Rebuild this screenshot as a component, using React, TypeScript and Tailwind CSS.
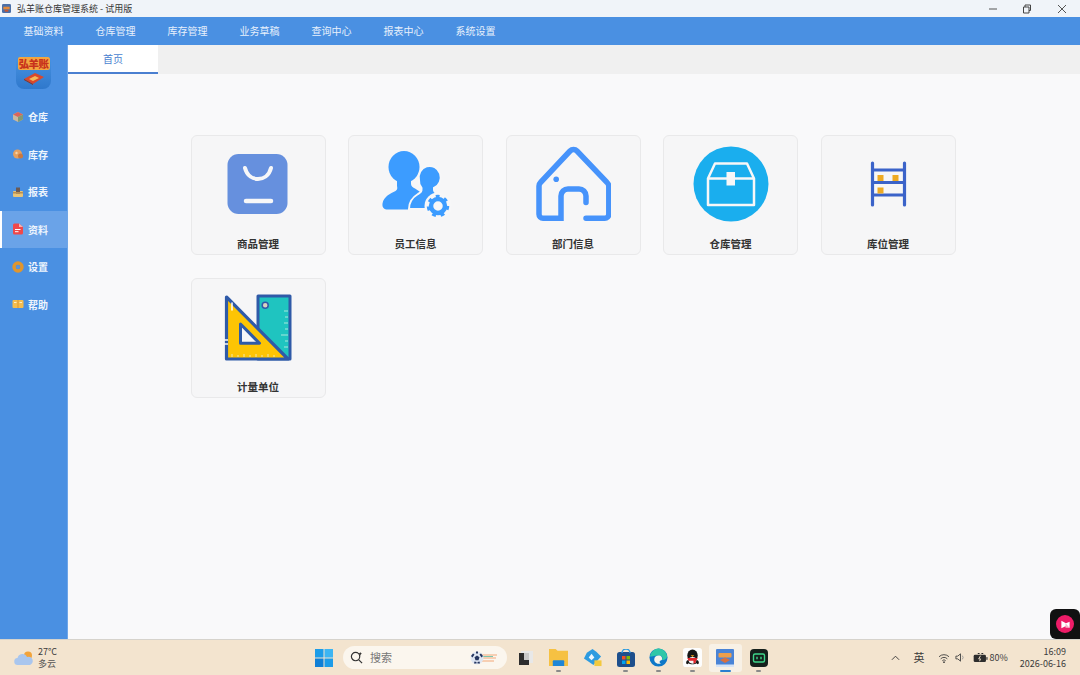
import React from "react";

const FONT = "font-['Noto_Sans_CJK_SC','Noto_Sans',sans-serif]";

const menus = ["基础资料", "仓库管理", "库存管理", "业务草稿", "查询中心", "报表中心", "系统设置"];

const BoxIcon = () => (
  <svg viewBox="0 0 12 12" className="h-3 w-3">
    <path d="M6 1l5 2.500v5L6 11 1 8.500v-5z" fill="#c9b8a0" />
    <path d="M6 1l5 2.500L6 6 1 3.500z" fill="#d9655c" />
    <path d="M6 6v5l5-2.500v-5z" fill="#7f9a76" />
  </svg>
);
const StockIcon = () => (
  <svg viewBox="0 0 12 12" className="h-3 w-3">
    <circle cx="5.500" cy="6" r="4.500" fill="#e5a05f" />
    <circle cx="8.500" cy="8" r="2.500" fill="#c9793f" />
    <circle cx="4.500" cy="5" r="1.200" fill="#f6d3a8" />
  </svg>
);
const ReportIcon = () => (
  <svg viewBox="0 0 12 12" className="h-3 w-3">
    <rect x="1" y="5" width="10" height="6" rx="1" fill="#e8c477" />
    <rect x="4" y="1.500" width="4" height="6" fill="#6b5a55" />
    <path d="M1 6h10v1.500H1z" fill="#b98f52" />
  </svg>
);
const DataIcon = () => (
  <svg viewBox="0 0 12 12" className="h-3 w-3">
    <path d="M1 2A1.500 1.500 0 0 1 2.500.5H7L11 4v6a1.500 1.500 0 0 1-1.500 1.500h-7A1.500 1.500 0 0 1 1 10z" fill="#f0484a" />
    <path d="M7 .5L11 4H7z" fill="#f9b0ae" />
    <path d="M3 6.500h5.500M3 8.700h3.500" stroke="#fff" strokeWidth="1" />
  </svg>
);
const SettingIcon = () => (
  <svg viewBox="0 0 12 12" className="h-3 w-3">
    <circle cx="6" cy="6" r="4" fill="none" stroke="#e0962e" strokeWidth="3.400" />
    <circle cx="6" cy="6" r="1.800" fill="#5f94d8" />
  </svg>
);
const HelpIcon = () => (
  <svg viewBox="0 0 12 12" className="h-3 w-3">
    <rect x=".5" y="2" width="11" height="8" rx="1" fill="#f4bd4f" />
    <path d="M6 2v8" stroke="#dd9630" strokeWidth="1" />
    <path d="M2 4.500h2.500M7.500 4.500H10" stroke="#fff0c8" strokeWidth="1" />
  </svg>
);

const sideItems = [
  { label: "仓库", icon: <BoxIcon /> },
  { label: "库存", icon: <StockIcon /> },
  { label: "报表", icon: <ReportIcon /> },
  { label: "资料", icon: <DataIcon />, active: true },
  { label: "设置", icon: <SettingIcon /> },
  { label: "帮助", icon: <HelpIcon /> },
];

const BagIcon = () => (
  <svg viewBox="0 0 76 76" className="h-full w-full">
    <rect x="7.500" y="8" width="60" height="60" rx="11" fill="#6690de" />
    <path d="M25 22c2 8 8 11 13 11s11-3 13-11" fill="none" stroke="#f7f7f8" strokeWidth="4" strokeLinecap="round" />
    <path d="M26 55h25" stroke="#f7f7f8" strokeWidth="4.500" strokeLinecap="round" />
  </svg>
);
const StaffIcon = () => (
  <svg viewBox="0 0 76 76" className="h-full w-full">
    <ellipse cx="26" cy="21" rx="15.500" ry="16" fill="#3c9cff" />
    <path d="M19 32h14v6c0 2 2 3.500 4 4.500l6 4-12 17H10c-4 0-6-2-5.500-6 1-7 8-10 13-12.500 2-1 2-3 1.500-5z" fill="#3c9cff" />
    <path
      d="M41 34a11 11.500 0 1 1 15 8v2c0 2 2 3 4 4l2 1-6 14H31c0-8 4-12 9-15 2-1 4-2 3.500-5v-1a11 11 0 0 1-2.500-8z"
      fill="#3c9cff"
      stroke="#f7f7f8"
      strokeWidth="2"
    />
    <circle cx="60" cy="60" r="13.500" fill="#f7f7f8" />
    <circle cx="60" cy="60" r="7" fill="none" stroke="#3c9cff" strokeWidth="4.500" />
    <circle cx="60" cy="60" r="9.500" fill="none" stroke="#3c9cff" strokeWidth="3.500" strokeDasharray="3.730 4.730" />
  </svg>
);
const HouseIcon = () => (
  <svg viewBox="0 0 76 76" className="h-full w-full">
    <path
      d="M51 56.500V50a7 7 0 0 0-7-7H33a7 7 0 0 0-7 7v22.300H8a4 4 0 0 1-4-4V40a5 5 0 0 1 1.500-3.500L35 5a5 5 0 0 1 7 0l30 31.500a5 5 0 0 1 1.800 3.500v28.300a4 4 0 0 1-4 4H51"
      fill="none"
      stroke="#4693fb"
      strokeWidth="5.500"
      strokeLinecap="round"
    />
    <circle cx="21.200" cy="33.300" r="2.800" fill="#4693fb" />
  </svg>
);
const ChestIcon = () => (
  <svg viewBox="0 0 76 76" className="h-full w-full">
    <circle cx="38" cy="38" r="37.500" fill="#1aaeee" />
    <path d="M15 32.500l7-15h32l7 15V59H15z" fill="none" stroke="#f7f7f8" strokeWidth="2.500" strokeLinejoin="round" />
    <path d="M15 32.500h46" stroke="#f7f7f8" strokeWidth="2.500" />
    <rect x="33.500" y="26" width="8.500" height="13.500" fill="#f7f7f8" />
  </svg>
);
const ShelfIcon = () => (
  <svg viewBox="0 0 76 76" className="h-full w-full">
    <path d="M22.500 17v42M54.500 17v42" stroke="#3b63c9" strokeWidth="3.200" strokeLinecap="round" />
    <path d="M22.500 24h32M22.500 36.500h32M22.500 49h32" stroke="#3b63c9" strokeWidth="3" />
    <rect x="27.500" y="29" width="6" height="6" fill="#eeaa22" />
    <rect x="42.500" y="29" width="6" height="6" fill="#eeaa22" />
    <rect x="27.500" y="41.500" width="6" height="6" fill="#eeaa22" />
  </svg>
);
const RulerIcon = () => (
  <svg viewBox="0 0 76 76" className="h-full w-full">
    <path d="M38 7h32v63H38z" fill="#1fc4c0" stroke="#2f5aa8" strokeWidth="3" strokeLinejoin="round" />
    <circle cx="45.200" cy="16.300" r="3" fill="#d9d2c0" stroke="#2f5aa8" strokeWidth="1.500" />
    <path d="M68 22h-4M68 28h-3M68 34h-4M68 40h-3M68 46h-7M68 52h-3M68 58h-4" stroke="#a8e8de" strokeWidth="1" />
    <path d="M6.500 8l61.500 62H6.500z" fill="#fdc404" stroke="#2f5aa8" strokeWidth="3.200" strokeLinejoin="round" />
    <path d="M20.500 35l19 19.300h-19z" fill="#f7f7f8" stroke="#2f5aa8" strokeWidth="3" strokeLinejoin="round" />
    <path d="M12 68v-3M18 68v-2M24 68v-3M30 68v-2M36 68v-3M42 68v-2M48 68v-3M54 68v-2" stroke="#f3e7ab" strokeWidth="1" />
    <path d="M12 14v7" stroke="#fff" strokeWidth="1.500" strokeLinecap="round" />
    <path d="M3 51h5M3 55h5" stroke="#f7f7f8" strokeWidth="1.500" />
  </svg>
);

const cards = [
  { label: "商品管理", icon: <BagIcon /> },
  { label: "员工信息", icon: <StaffIcon /> },
  { label: "部门信息", icon: <HouseIcon /> },
  { label: "仓库管理", icon: <ChestIcon /> },
  { label: "库位管理", icon: <ShelfIcon /> },
  { label: "计量单位", icon: <RulerIcon /> },
];

const AppLogo = () => (
  <div className="flex h-[35px] w-[35px] flex-col items-center overflow-hidden rounded-[8px] bg-gradient-to-b from-[#4a96e4] to-[#2f78cc] pt-[3px]">
    <span className="rounded-[2px] bg-[#f4a640] px-[1px] text-[10.5px] font-black leading-[13px] tracking-[-0.5px] text-[#c8321c]">
      弘羊账
    </span>
    <svg viewBox="0 0 24 14" className="mt-[1px] h-[14px] w-[24px]">
      <path d="M2 8l11-6 9 4-11 7z" fill="#d9482c" />
      <path d="M7 8l6-3 4 2-6 3z" fill="#f5b85a" />
      <path d="M2 8l9 5v1L2 9z" fill="#8c2f1c" />
    </svg>
  </div>
);

const AppSmall = () => (
  <svg viewBox="0 0 18 18" className="h-full w-full">
    <rect width="18" height="18" rx="1" fill="#4a84d6" />
    <rect x="2.500" y="4" width="13" height="4.500" rx="1" fill="#ee9f4a" />
    <path d="M4 11l5-2.500 5 2.500-5 3z" fill="#d8703f" />
    <rect y="15.500" width="18" height="2.500" fill="#d6e4f6" />
  </svg>
);

const taskIcons = [
  {
    dot: false,
    svg: (
      <svg viewBox="0 0 16 16" className="h-[16px] w-[16px]">
        <rect x="3" y="1" width="12" height="12" fill="#e8e8e8" />
        <rect x="1" y="3" width="10" height="12" fill="#2d2d2d" />
        <rect x="6" y="3" width="5" height="7" fill="#c9c9c9" />
      </svg>
    ),
  },
  {
    dot: true,
    svg: (
      <svg viewBox="0 0 20 20" className="h-[19px] w-[19px]">
        <path d="M0 1h7l2 2h11v16H0z" fill="#f6c142" />
        <path d="M5 13h10a1 1 0 0 1 1 1v5H4v-5a1 1 0 0 1 1-1z" fill="#1e86d6" />
      </svg>
    ),
  },
  {
    dot: false,
    svg: (
      <svg viewBox="0 0 20 20" className="h-[19px] w-[19px]">
        <path d="M10 1l4 3 5 5-8 9-10-7 3-6z" fill="#2d9be0" />
        <path d="M9 6l3 4-3 3-3-3z" fill="#eaf6ff" />
        <rect x="12" y="13" width="7.500" height="6" fill="#f3c93d" />
      </svg>
    ),
  },
  {
    dot: true,
    svg: (
      <svg viewBox="0 0 18 18" className="h-[18px] w-[18px]">
        <rect y="3" width="18" height="15" rx="2.500" fill="#1d4f8c" />
        <path d="M5 4a4 4 0 0 1 8 0" fill="none" stroke="#2d9be0" strokeWidth="1.500" />
        <rect x="5" y="7" width="3.500" height="3.500" fill="#f25022" />
        <rect x="9.500" y="7" width="3.500" height="3.500" fill="#7fba00" />
        <rect x="5" y="11.500" width="3.500" height="3.500" fill="#00a4ef" />
        <rect x="9.500" y="11.500" width="3.500" height="3.500" fill="#ffb900" />
      </svg>
    ),
  },
  {
    dot: true,
    svg: (
      <svg viewBox="0 0 20 20" className="h-[19px] w-[19px]">
        <circle cx="10" cy="10" r="9.500" fill="#0f78c8" />
        <path d="M1 9c1-5 5-8.500 9-8.500 5 0 9 4 9 8.500 0 3-3 4-5.500 3.500 1.500-2 .5-4-3-4.500C7 7.500 4 9 1 9z" fill="#2fc7a8" />
        <path d="M5.500 12c0-3 3-4.500 5.500-4 2 .5 3.500 2 2.500 4.500-2 .5-3.500 2-1 4-3 .8-7-1-7-4.500z" fill="#f8f3ea" />
      </svg>
    ),
  },
  {
    dot: true,
    svg: (
      <svg viewBox="0 0 20 20" className="h-[19px] w-[19px]">
        <rect width="20" height="20" rx="3" fill="#fdfdfd" />
        <ellipse cx="10" cy="8" rx="5.500" ry="6.500" fill="#161616" />
        <path d="M4 13.500C3 15 3 17 4.500 17l1.500-1c1 1.500 7 1.500 8 0l1.500 1c1.500 0 1.500-2 .5-3.500-1-2-11-2-12 0z" fill="#161616" />
        <ellipse cx="10" cy="13" rx="4" ry="3.500" fill="#f7f7f7" />
        <path d="M4.500 10.500h11l-1.500 2.500-1 3h-2v-2.500H6z" fill="#e0252b" />
        <path d="M8 7.500h4l-2 2z" fill="#f4a81c" />
      </svg>
    ),
  },
  { dot: false, active: true, svg: <span className="block h-[18px] w-[18px]"><AppSmall /></span> },
  {
    dot: true,
    svg: (
      <svg viewBox="0 0 18 18" className="h-[18px] w-[18px]">
        <rect width="18" height="18" rx="4" fill="#15201c" />
        <rect x="3.500" y="5" width="11" height="8" rx="1.500" fill="none" stroke="#3ed68a" strokeWidth="1.400" />
        <path d="M7 7.800v2.400M11 7.800v2.400" stroke="#3ed68a" strokeWidth="1.400" />
      </svg>
    ),
  },
];

export default function App() {
  return (
    <div className={`relative flex h-[675px] w-[1080px] flex-col overflow-hidden bg-[#f9f9fa] ${FONT}`}>
      {/* title bar */}
      <div className="flex h-[17px] shrink-0 items-center bg-[#f0f4f9] pl-[2px] text-[#333]">
        <svg viewBox="0 0 10 10" className="h-[9px] w-[9px]">
          <rect width="10" height="10" rx="1.500" fill="#4a6fa8" />
          <rect x="1.500" y="3" width="7" height="3" fill="#e58a3a" />
          <rect x="3" y="6.500" width="4" height="2" fill="#c9552f" />
        </svg>
        <span className="ml-[6px] text-[9px] leading-none">弘羊账仓库管理系统 - 试用版</span>
        <div className="ml-auto flex items-center">
          <svg viewBox="0 0 10 10" className="h-[10px] w-[10px]"><path d="M1 5h8" stroke="#555" strokeWidth="1" /></svg>
          <svg viewBox="0 0 10 10" className="ml-[24px] h-[10px] w-[10px]">
            <path d="M1.500 3h5.500v6H1.500zM3 3V1h5.500v5.500H7" fill="none" stroke="#444" strokeWidth="1" />
          </svg>
          <svg viewBox="0 0 10 10" className="ml-[25px] mr-[13px] h-[10px] w-[10px]">
            <path d="M1 1l8 8M9 1l-8 8" stroke="#555" strokeWidth="1" />
          </svg>
        </div>
      </div>

      {/* menu bar */}
      <div className="flex h-[28px] shrink-0 items-center bg-[#4a90e2] pb-[1px] pl-[7.500px]">
        {menus.map((m) => (
          <span key={m} className="w-[72px] text-center text-[10px] text-[#e8f1fc]">{m}</span>
        ))}
      </div>

      <div className="flex min-h-0 flex-1">
        {/* sidebar */}
        <aside className="flex w-[68px] shrink-0 flex-col border-r border-[#6fa6e8] bg-[#4a90e2]">
          <div className="ml-[16px] mt-[9px] h-[44px]"><AppLogo /></div>
          {sideItems.map((s) => (
            <div
              key={s.label}
              className={`flex h-[37.5px] items-center ${s.active ? "border-l-2 border-white bg-[#6aa3e8] pl-[10px]" : "pl-[12px]"}`}
            >
              {s.icon}
              <span className="ml-[4px] text-[10px] font-bold text-[#eef5fd]">{s.label}</span>
            </div>
          ))}
        </aside>

        {/* main */}
        <main className="flex min-w-0 flex-1 flex-col">
          <div className="flex h-[29px] shrink-0 bg-[#f0f0f0]">
            <div className="flex w-[90px] items-center justify-center border-b-2 border-[#4a7fd0] bg-white text-[10px] text-[#4a7fd0]">
              首页
            </div>
          </div>
          <div className="flex flex-wrap content-start gap-x-[22.500px] gap-y-[23px] pl-[122.500px] pr-[100px] pt-[61px]">
            {cards.map((c) => (
              <div
                key={c.label}
                className="flex h-[120px] w-[135px] flex-col items-center rounded-[6px] border border-[#e9e9ea] bg-[#f6f6f7]"
              >
                <div className="mt-[10px] h-[76px] w-[76px]">{c.icon}</div>
                <span className="mt-[14px] text-[10.5px] font-bold leading-[16px] text-[#333]">{c.label}</span>
              </div>
            ))}
          </div>
        </main>
      </div>

      {/* taskbar */}
      <div className="flex h-[36px] shrink-0 items-center border-t border-[#d6d3cc] bg-[#f3e4cf] text-[#3a3a3a]">
        <div className="flex w-[315px] items-center pl-[14px]">
          <svg viewBox="0 0 20 16" className="h-[16px] w-[20px]">
            <circle cx="14" cy="5.500" r="4" fill="#f2a33a" />
            <path d="M4 15a3.500 3.500 0 0 1-.5-7 5 5 0 0 1 9.500-1 4 4 0 0 1 3 8z" fill="#a9c6ee" />
          </svg>
          <div className="ml-[4px] flex flex-col text-[9px] leading-[12px]">
            <span>27°C</span>
            <span className="text-[#555]">多云</span>
          </div>
        </div>

        {/* start */}
        <svg viewBox="0 0 18 18" className="h-[18px] w-[18px] shrink-0">
          <path d="M0 0h8.500v8.500H0z" fill="#1c9ce8" />
          <path d="M9.500 0H18v8.500H9.500z" fill="#3db5f2" />
          <path d="M0 9.500h8.500V18H0z" fill="#0f7fd6" />
          <path d="M9.500 9.500H18V18H9.500z" fill="#1c9ce8" />
        </svg>

        {/* search */}
        <div className="ml-[10px] flex h-[23px] w-[164px] shrink-0 items-center rounded-full bg-[#fbf6ee] pl-[7px]">
          <svg viewBox="0 0 14 14" className="h-[13px] w-[13px]">
            <circle cx="6" cy="6" r="4.500" fill="none" stroke="#333" strokeWidth="1.300" />
            <path d="M9.500 9.500L13 13" stroke="#333" strokeWidth="1.300" />
            <path d="M11 1l.6 1.400L13 3l-1.400.6L11 5l-.6-1.400L9 3l1.400-.6z" fill="#222" />
          </svg>
          <span className="ml-[7px] text-[11px] text-[#777]">搜索</span>
          <svg viewBox="0 0 28 14" className="ml-auto mr-[9px] h-[14px] w-[28px]">
            <path d="M12 4h15M13 7h13M12 10h12" stroke="#f3a878" strokeWidth="1" />
            <path d="M13 5.500h10" stroke="#7cc7b0" strokeWidth="1" />
            <circle cx="7" cy="7" r="6.500" fill="#dfe6f2" />
            <path d="M7 4.500L9.500 6.300 8.500 9.200h-3L4.500 6.300z" fill="#24355f" />
            <path d="M1 5l2-2.500 1.500 1-2 3zM13 5l-2-2.500-1.500 1 2 3zM4 12.500l.5-2 2 .5v1.500zM10 12.500l-.5-2-2 .5v1.500zM6 .5h2v2H6z" fill="#24355f" />
          </svg>
        </div>

        {/* pinned apps */}
        <div className="ml-[2px] flex shrink-0">
          {taskIcons.map((t, i) => (
            <div
              key={i}
              className={`relative flex h-[28px] w-[33.3px] items-center justify-center rounded-[3px] ${t.active ? "bg-[#f8f1e6]" : ""}`}
            >
              {t.svg}
              {t.dot && <span className="absolute bottom-0 h-[2px] w-[5px] rounded-full bg-[#8a8a8a]" />}
              {t.active && <span className="absolute bottom-0 h-[2px] w-[11px] rounded-full bg-[#2a7fd0]" />}
            </div>
          ))}
        </div>

        {/* tray */}
        <div className="ml-auto flex items-center pr-[14px]">
          <svg viewBox="0 0 10 6" className="h-[6px] w-[9px]">
            <path d="M1 5l4-4 4 4" fill="none" stroke="#333" strokeWidth="1" />
          </svg>
          <span className="ml-[14px] text-[11px]">英</span>
          <svg viewBox="0 0 14 12" className="ml-[13px] h-[10px] w-[12px]">
            <path d="M1 4.500a8.500 8.500 0 0 1 12 0M3 7a5.500 5.500 0 0 1 8 0M5 9.300a2.500 2.500 0 0 1 4 0" fill="none" stroke="#333" strokeWidth="1" />
            <circle cx="7" cy="11" r="1" fill="#333" />
          </svg>
          <svg viewBox="0 0 12 12" className="ml-[5px] h-[11px] w-[11px]">
            <path d="M1 4.500h2L6 2v8L3 7.500H1z" fill="none" stroke="#444" strokeWidth="1" />
            <path d="M8 4a3 3 0 0 1 0 4" fill="none" stroke="#999" strokeWidth="1" />
          </svg>
          <svg viewBox="0 0 16 11" className="ml-[7px] h-[10px] w-[15px]">
            <rect x=".5" y="2" width="13.500" height="8" rx="1.500" fill="#2d2d2d" />
            <rect x="14.500" y="4.500" width="1.200" height="3" fill="#2d2d2d" />
            <path d="M5 0h2M9 0h2" stroke="#2d2d2d" strokeWidth="2" />
            <path d="M8 3L6 6.500h2L7 9" stroke="#f3e4cf" strokeWidth="1" fill="none" />
          </svg>
          <span className="ml-[2px] text-[9px]">80%</span>
          <div className="ml-[12px] flex flex-col items-end text-[9px] leading-[12px]">
            <span>16:09</span>
            <span>2026-06-16</span>
          </div>
        </div>
      </div>

      {/* floating widget over the corner */}
      <div className="absolute bottom-[36px] right-0 flex h-[30px] w-[30px] items-center justify-center rounded-l-[6px] rounded-tr-[6px] bg-[#111]">
        <div className="flex h-[18px] w-[18px] items-center justify-center rounded-full bg-[#ee1c68]">
          <svg viewBox="0 0 12 12" className="h-[11px] w-[11px]">
            <path d="M1.500 2l5 2.500 4-1.500v6.500L6 8l-4.500 2z" fill="#fff" />
            <path d="M6 4.500l4.500 5H6z" fill="#f8b5cb" />
          </svg>
        </div>
      </div>
    </div>
  );
}
